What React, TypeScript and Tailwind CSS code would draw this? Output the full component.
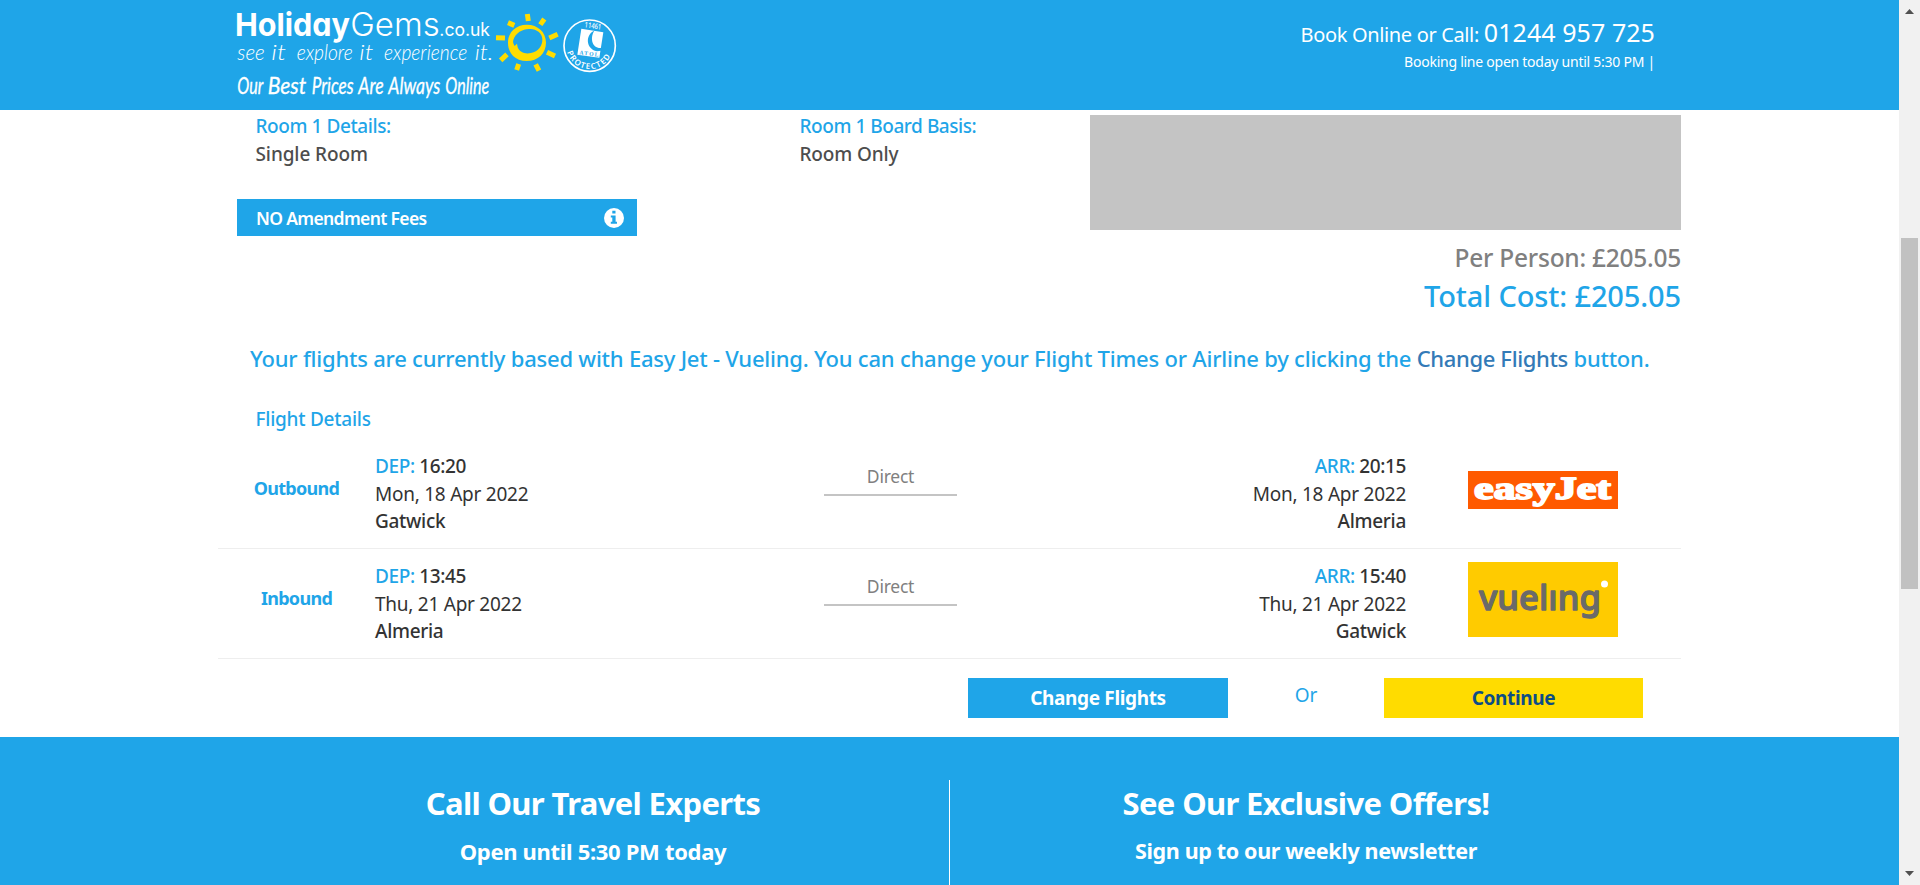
import type { ReactNode } from "react";

interface Word {
  text: string;
  x: number;
  width: number;
}

const strapline: Word[] = [
  { text: "see", x: 52, width: 82 },
  { text: "it", x: 154, width: 44 },
  { text: "explore", x: 230, width: 168 },
  { text: "it", x: 418, width: 42 },
  { text: "experience", x: 492, width: 250 },
  { text: "it.", x: 764, width: 56 },
];

const slogan: Word[] = [
  { text: "Our", x: 52, width: 78 },
  { text: "Best", x: 143, width: 116 },
  { text: "Prices", x: 275, width: 126 },
  { text: "Are", x: 415, width: 76 },
  { text: "Always", x: 505, width: 156 },
  { text: "Online", x: 676, width: 132 },
];

function BrandLogo() {
  return (
    <svg className="block h-[110px] w-[420px]" viewBox="0 0 1260 330" fill="#fff">
      <text x="45" y="109" fontSize="95" fontWeight="700" textLength="345" lengthAdjust="spacingAndGlyphs" className="font-['Inter',sans-serif] [font-feature-settings:'cv11']">Holiday</text>
      <text x="391" y="109" fontSize="96" fontWeight="300" textLength="268" lengthAdjust="spacingAndGlyphs" className="font-['Inter',sans-serif]">Gems</text>
      <text x="658" y="109" fontSize="54" fontWeight="400" textLength="152" lengthAdjust="spacingAndGlyphs" className="font-['Inter',sans-serif]">.co.uk</text>
      <g fontSize="62" fontWeight="300" fontStyle="italic" className="font-['Lato',sans-serif]">
        {strapline.map((w) => (
          <text key={w.x} x={w.x} y="180" textLength={w.width} lengthAdjust="spacingAndGlyphs">{w.text}</text>
        ))}
      </g>
      <g fontSize="70" fontWeight="400" fontStyle="italic" stroke="#fff" strokeWidth="1" className="font-['Lato',sans-serif]">
        {slogan.map((w) => (
          <text key={w.x} x={w.x} y="283" textLength={w.width} lengthAdjust="spacingAndGlyphs">{w.text}</text>
        ))}
      </g>
      <g stroke="#ffdc00" strokeWidth="15">
        <path d="M922 42l3 21M973 57l-12 17M1013 103l-25 11M1005 168l-24-11M957 212l-10-19M890 210l6-18M842 181l19-18M828 113l27 1M864 68l19 8" />
      </g>
      <path fill="#ffdc00" fillRule="evenodd" d="M921 74C953 74 978 96 978 128S954 183 920 183S864 160 864 128S888 74 921 74ZM931 87C911 85 887 97 880 120C878 127 880 132 884 138L891 131L893 142C899 157 915 163 933 159C955 155 968 137 967 117C966 99 950 88 931 87Z" />
      <circle cx="1109" cy="137" r="77" fill="none" stroke="#fff" strokeWidth="5" />
      <text x="1093" y="82" fontSize="23" fontWeight="500" textLength="50" lengthAdjust="spacingAndGlyphs" transform="rotate(8 1093 82)" className="font-['Noto_Sans',sans-serif]">11461</text>
      <path d="M1084 86L1150 97L1138 173L1072 164Z" />
      <path d="M1123 92C1096 103 1096 146 1131 154L1143 152L1144 144C1114 146 1110 111 1123 92Z" fill="#1fa5e8" />
      <text x="1078" y="163" fontSize="17" fontWeight="700" fill="#1fa5e8" textLength="57" transform="rotate(7 1078 163)" className="font-['Liberation_Serif',serif]">ATOL</text>
      <path id="seal-arc" d="M1040 149A70 70 0 0 0 1178 149" fill="none" />
      <text fontSize="24" fontWeight="600" className="font-['Noto_Sans',sans-serif]">
        <textPath href="#seal-arc" startOffset="7" textLength="168">PROTECTED</textPath>
      </text>
    </svg>
  );
}

function EasyJetLogo() {
  return (
    <svg className="block h-[38px] w-[150px]" viewBox="0 0 150 38">
      <rect width="150" height="38" fill="#ff5a00" />
      <text x="6" y="28" fontSize="32" fontWeight="700" fill="#fff" stroke="#fff" strokeWidth="1.8" strokeLinejoin="round" textLength="137" lengthAdjust="spacingAndGlyphs" className="font-['Liberation_Serif',serif]">easyJet</text>
    </svg>
  );
}

function VuelingLogo() {
  return (
    <svg className="block h-[75px] w-[150px]" viewBox="0 0 150 75">
      <rect width="150" height="75" fill="#ffcb00" />
      <text x="11" y="47.5" fontSize="35" fontWeight="500" fill="#6a6a6a" stroke="#6a6a6a" strokeWidth="1.3" strokeLinejoin="round" textLength="122" lengthAdjust="spacingAndGlyphs" className="font-['Noto_Sans',sans-serif]">vuelıng</text>
      <circle cx="136.5" cy="22" r="3.5" fill="#fff" />
    </svg>
  );
}

interface Leg {
  name: string;
  dep: string;
  arr: string;
  date: string;
  from: string;
  to: string;
  logo: ReactNode;
}

const legs: Leg[] = [
  { name: "Outbound", dep: "16:20", arr: "20:15", date: "Mon, 18 Apr 2022", from: "Gatwick", to: "Almeria", logo: <EasyJetLogo /> },
  { name: "Inbound", dep: "13:45", arr: "15:40", date: "Thu, 21 Apr 2022", from: "Almeria", to: "Gatwick", logo: <VuelingLogo /> },
];

function Stop({ label, time, date, place }: { label: string; time: string; date: string; place: string }) {
  return (
    <div className="pt-[14px] text-[19px] leading-[27.5px] tracking-[-0.25px] text-[#333]">
      <div className="font-medium tracking-[-0.4px]">
        <span className="text-[#1fa5e8]">{label}:</span> {time}
      </div>
      <div>{date}</div>
      <div className="font-medium tracking-[-0.3px]">{place}</div>
    </div>
  );
}

function LegRow({ leg }: { leg: Leg }) {
  return (
    <div className="flex h-[110px] border-b border-[#eee]">
      <div className="w-[157px] pt-[35px] text-center text-[18px] leading-[28px] font-bold tracking-[-0.7px] text-[#1fa5e8]">{leg.name}</div>
      <div className="w-[449px]">
        <Stop label="DEP" time={leg.dep} date={leg.date} place={leg.from} />
      </div>
      <div className="w-[133px] pt-[23px] text-center">
        <div className="h-[34px] border-b-2 border-[#c4c4c4] text-[17.5px] leading-[28px] tracking-[-0.25px] text-[#808080]">Direct</div>
      </div>
      <div className="w-[449px] text-right">
        <Stop label="ARR" time={leg.arr} date={leg.date} place={leg.to} />
      </div>
      <div className="ml-[62px] flex h-[101px] items-center">{leg.logo}</div>
    </div>
  );
}

export default function App() {
  return (
    <div className="flex h-[885px] w-[1920px] overflow-hidden bg-white font-['Noto_Sans','Open_Sans',sans-serif]">
      <div className="flex w-[1899px] flex-col">
        <header className="flex h-[110px] justify-between bg-[#1fa5e8] pr-[244px] pl-[220px] text-white">
          <BrandLogo />
          <div className="pt-[14px] text-right">
            <div className="text-[20px] leading-[36px] tracking-[-0.35px]">
              Book Online or Call: <span className="text-[25px] tracking-[0.07px]">01244 957 725</span>
            </div>
            <div className="-mt-px text-[14px] leading-[20px] tracking-[-0.25px]">Booking line open today until 5:30 PM |</div>
          </div>
        </header>

        <main className="ml-[218px] flex h-[627px] w-[1463px] flex-col">
          <section className="flex justify-between">
            <div className="w-[860px] pt-0.5">
              <div className="flex pl-[37.5px] text-[19px] leading-[28px] font-medium text-[#4d4d4d]">
                <div className="w-[544px]">
                  <div className="tracking-[-0.42px] text-[#1fa5e8]">Room 1 Details:</div>
                  <div className="tracking-[-0.1px]">Single Room</div>
                </div>
                <div>
                  <div className="tracking-[-0.45px] text-[#1fa5e8]">Room 1 Board Basis:</div>
                  <div className="tracking-[-0.15px]">Room Only</div>
                </div>
              </div>
              <div className="mt-[31px] ml-[19px] flex h-[37px] w-[400px] items-center justify-between bg-[#1fa5e8] pr-[13px] pl-[19px] text-white">
                <span className="pt-0.5 text-[17.5px] font-semibold tracking-[-0.65px]">NO Amendment Fees</span>
                <svg className="h-5 w-5" viewBox="0 0 20 20">
                  <circle cx="10" cy="10" r="10" fill="#fff" />
                  <path d="M8.3 2.8h3.2v2.7H8.3zM6.8 7.5h4.8v6.3h1.4v2H6.8v-2h1.5V9.5H6.8z" fill="#1fa5e8" />
                </svg>
              </div>
            </div>
            <div className="w-[591px] pt-[5px] text-right font-medium">
              <div className="h-[115px] bg-[#c4c4c4]" />
              <div className="mt-[9px] text-[24.5px] leading-[38px] tracking-[-0.25px] text-[#808080]">Per Person: £205.05</div>
              <div className="-mt-px text-[29px] leading-[40px] tracking-[-0.12px] text-[#1fa5e8]">Total Cost: £205.05</div>
            </div>
          </section>

          <p className="mt-[26px] pl-[32px] text-[22px] leading-[32px] font-medium tracking-[-0.22px] whitespace-nowrap text-[#1fa5e8]">
            Your flights are currently based with Easy Jet - Vueling. You can change your Flight Times or Airline by clicking the{" "}
            <a className="tracking-[-0.35px] text-[#337ab7]">Change Flights</a> button.
          </p>

          <h2 className="mt-[31px] mb-1.5 pl-[37.5px] text-[19px] leading-[28px] font-medium tracking-[-0.25px] text-[#1fa5e8]">Flight Details</h2>

          {legs.map((leg) => (
            <LegRow key={leg.name} leg={leg} />
          ))}

          <div className="mt-[19px] flex h-10 justify-end pr-[38px] text-[19px] leading-[40px] font-bold">
            <button className="w-[260px] bg-[#1fa5e8] tracking-[-0.35px] text-white">Change Flights</button>
            <span className="w-[156px] text-center leading-[35px] font-normal text-[#1fa5e8]">Or</span>
            <button className="w-[259px] bg-[#ffdc00] tracking-[-0.35px] text-[#0d4d85]">Continue</button>
          </div>
        </main>

        <footer className="flex h-[148px] bg-[#1fa5e8] pt-[43px] pl-[237px] text-center font-bold text-white">
          <div className="w-[713px] border-r border-white pt-[3px]">
            <div className="text-[31px] leading-[40px] tracking-[-0.65px]">Call Our Travel Experts</div>
            <div className="mt-[13px] text-[22px] leading-[30px] tracking-[-0.32px]">Open until 5:30 PM today</div>
          </div>
          <div className="w-[712px] pt-[3px]">
            <div className="text-[31px] leading-[40px] tracking-[-0.65px]">See Our Exclusive Offers!</div>
            <div className="mt-[13px] text-[21.5px] leading-[30px] tracking-[-0.35px]">Sign up to our weekly newsletter</div>
          </div>
        </footer>
      </div>

      <div className="flex w-[21px] flex-col items-center justify-between bg-[#f1f1f1] pt-[9px] pb-[9px]">
        <svg className="h-[5px] w-[9px]" viewBox="0 0 9 5"><path d="M4.5 0L9 5H0z" fill="#505050" /></svg>
        <div className="mt-[224px] mb-auto h-[351px] w-[17px] bg-[#c1c1c1]" />
        <svg className="h-[5px] w-[9px]" viewBox="0 0 9 5"><path d="M0 0h9L4.5 5z" fill="#505050" /></svg>
      </div>
    </div>
  );
}
